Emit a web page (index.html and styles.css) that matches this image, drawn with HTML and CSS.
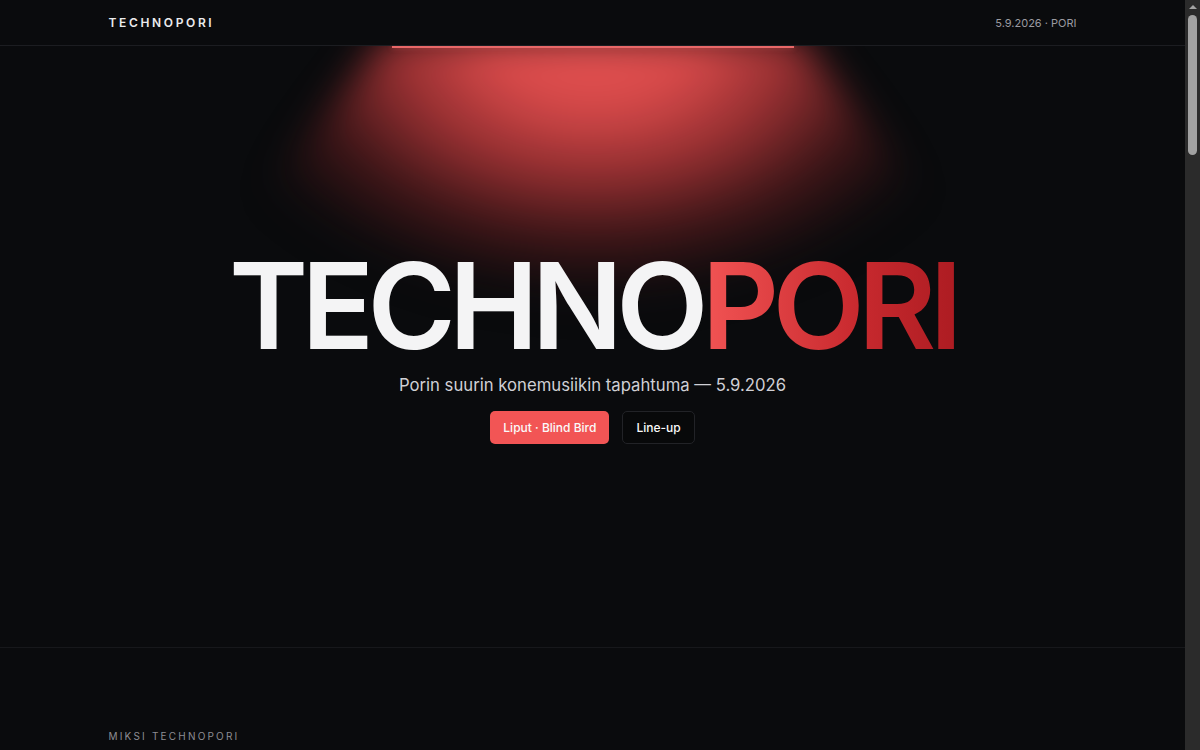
FILE: index.html
```html
<!DOCTYPE html>
<html lang="fi">
<head>
<meta charset="utf-8">
<title>Technopori</title>
<link rel="stylesheet" href="styles.css">
</head>
<body>
<div class="scrollbar" aria-hidden="true"><div class="scroll-arrow"></div><div class="scroll-thumb"></div></div>
<header class="site-header">
  <div class="container header-inner">
    <div class="logo">TECHNOPORI</div>
    <div class="meta">5.9.2026 · PORI</div>
  </div>
</header>
<main>
  <section class="hero">
    <div class="lamp">
      <div class="lamp-glow"><div class="lamp-cone"></div></div>
      <div class="lamp-line"></div>
    </div>
    <div class="hero-content">
      <h1 class="hero-title">TECHNO<span class="accent">PORI</span></h1>
      <p class="hero-sub">Porin suurin konemusiikin tapahtuma — 5.9.2026</p>
      <div class="hero-actions">
        <a class="btn btn-primary" href="#liput">Liput · Blind Bird</a>
        <a class="btn btn-ghost" href="#lineup">Line-up</a>
      </div>
    </div>
  </section>
  <section class="why">
    <div class="container">
      <div class="eyebrow">MIKSI TECHNOPORI</div>
      <h2 class="why-title">Yksi yö. Yksi kaupunki. Rajaton ääni.</h2>
      <p class="why-text">Technopori tuo Poriin kansainvälisen tason elektronisen musiikin tapahtuman, jossa äänentoisto, valot ja tunnelma kohtaavat.</p>
    </div>
  </section>
</main>
</body>
</html>
```
FILE: styles.css
```css
* { box-sizing: border-box; }
html, body { margin: 0; padding: 0; }
body {
  background: #0a0b0d;
  color: #e4e4e7;
  font-family: Inter, "Noto Sans", "Liberation Sans", sans-serif;
  min-height: 1400px;
  margin-right: 15px;
}
.scrollbar {
  position: fixed;
  top: 0;
  right: 0;
  bottom: 0;
  width: 15px;
  background: #2b2b2b;
  z-index: 20;
}
.scroll-arrow {
  width: 0;
  height: 0;
  margin: 5px auto 0;
  border-left: 4px solid transparent;
  border-right: 4px solid transparent;
  border-bottom: 4px solid #a3a3a3;
}
.scroll-thumb {
  width: 9px;
  height: 140px;
  margin: 6px auto 0;
  border-radius: 5px;
  background: #a2a2a2;
}
.container {
  max-width: 1000px;
  margin: 0 auto;
  padding: 0 16px;
}
.site-header {
  position: relative;
  z-index: 5;
  background: #0a0b0d;
  border-bottom: 1px solid #1c1d21;
}
.header-inner {
  height: 45px;
  display: flex;
  align-items: center;
  justify-content: space-between;
}
.logo {
  font-size: 12px;
  font-weight: 600;
  letter-spacing: 0.22em;
  color: #ececee;
}
.meta {
  font-size: 11px;
  color: #9a9aa0;
}
.hero {
  position: relative;
  height: 602px;
  overflow: hidden;
  border-bottom: 1px solid #17181b;
}
.lamp {
  position: absolute;
  left: 50%;
  top: 0;
  width: 1000px;
  margin-left: -500px;
  height: 320px;
  pointer-events: none;
}
.lamp-glow {
  position: absolute;
  inset: 0;
  filter: blur(18px);
}
.lamp-cone {
  position: absolute;
  left: 70px;
  right: 70px;
  top: -10px;
  height: 280px;
  clip-path: polygon(26% 0, 74% 0, 100% 100%, 0 100%);
  background: radial-gradient(ellipse 48% 100% at 50% 0%, rgba(228,82,82,1) 0%, rgba(222,76,76,0.97) 25%, rgba(190,58,60,0.78) 48%, rgba(120,34,36,0.45) 72%, rgba(40,12,14,0.08) 92%, rgba(30,10,12,0) 100%);
}
.lamp-line {
  position: absolute;
  top: 0;
  left: 50%;
  width: 402px;
  margin-left: -201px;
  height: 2px;
  background: #e86868;
  box-shadow: 0 0 5px rgba(240,100,100,0.5);
}
.hero-content {
  position: relative;
  z-index: 2;
  display: flex;
  flex-direction: column;
  align-items: center;
  padding-top: 200px;
}
.hero-title {
  margin: 0;
  font-size: 120px;
  line-height: 1;
  font-weight: 600;
  letter-spacing: -0.056em;
  color: #f4f4f5;
}
.accent {
  background: linear-gradient(90deg, #f25454 0%, #c92a2f 60%, #ad1c22 100%);
  -webkit-background-clip: text;
  background-clip: text;
  color: transparent;
}
.hero-sub {
  margin: 6px 0 0;
  font-size: 16.7px;
  line-height: 26px;
  color: #d0d0d5;
}
.hero-actions {
  display: flex;
  gap: 13px;
  margin-top: 13px;
}
.btn {
  display: inline-flex;
  align-items: center;
  justify-content: center;
  height: 33px;
  padding: 0 13px;
  border-radius: 5px;
  font-size: 12px;
  font-weight: 500;
  text-decoration: none;
  color: #fafafa;
}
.btn-primary {
  background: #f25555;
}
.btn-ghost {
  background: #08090a;
  border: 1px solid #222327;
}
.why {
  padding-top: 82px;
}
.eyebrow {
  font-size: 10px;
  letter-spacing: 0.22em;
  color: #8d8d93;
}
.why-title {
  margin: 16px 0 0;
  font-size: 40px;
  font-weight: 600;
  color: #f4f4f5;
}
.why-text {
  color: #a1a1aa;
  font-size: 16px;
  max-width: 600px;
}
```
